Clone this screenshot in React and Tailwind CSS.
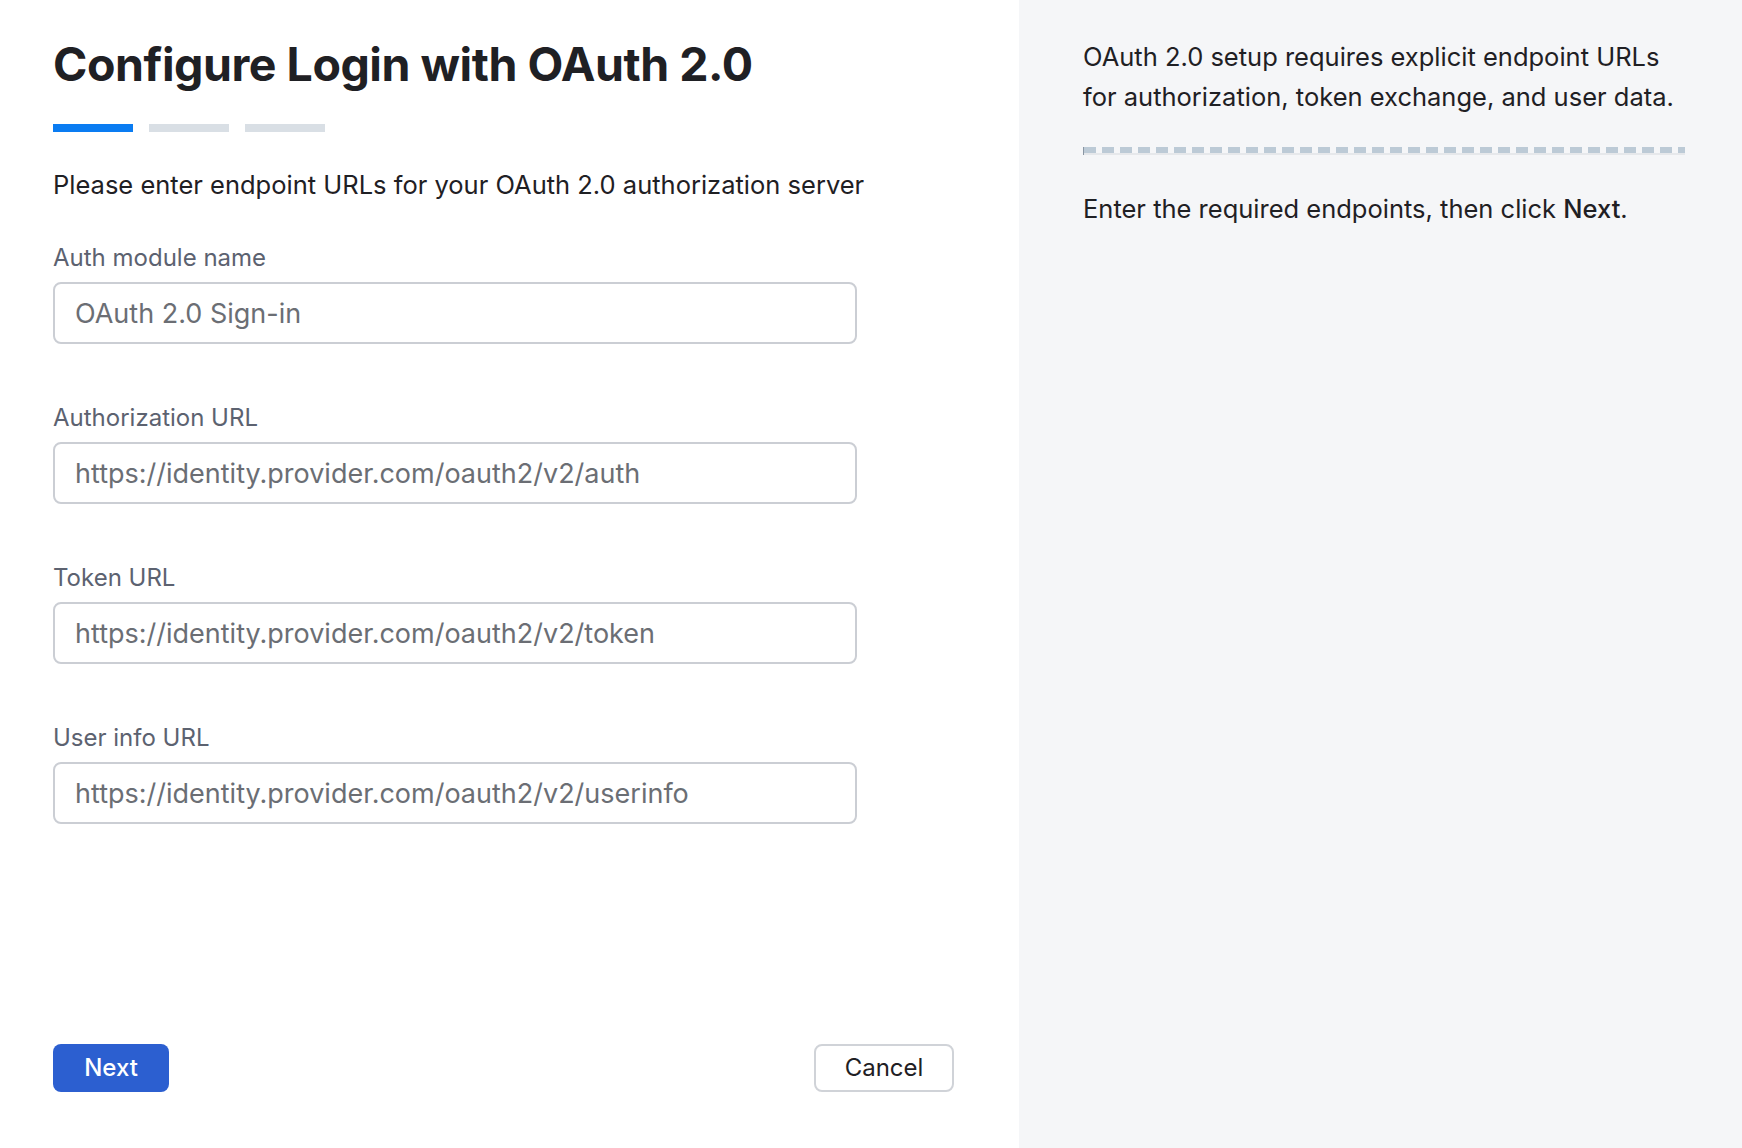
export default function App() {
  const fields = [
    { label: "Auth module name", value: "OAuth 2.0 Sign-in" },
    { label: "Authorization URL", value: "https://identity.provider.com/oauth2/v2/auth" },
    { label: "Token URL", value: "https://identity.provider.com/oauth2/v2/token" },
    { label: "User info URL", value: "https://identity.provider.com/oauth2/v2/userinfo" },
  ];

  return (
    <div className="flex h-[1148px] w-full font-['Inter',sans-serif] text-[#1f2024]">
      {/* left: form */}
      <div className="flex w-[1019px] shrink-0 flex-col bg-white pl-[53px] pr-[65px]">
        <h1 className="mt-[37px] text-[46.5px] font-bold leading-[54px] tracking-[-0.01em]">
          Configure Login with OAuth 2.0
        </h1>
        <div className="mt-[33px] flex gap-4">
          <div className="h-2 w-20 bg-[#0a7cf2]" />
          <div className="h-2 w-20 bg-[#d9dfe5]" />
          <div className="h-2 w-20 bg-[#d9dfe5]" />
        </div>
        <p className="mt-[37px] text-[25.5px] leading-[32px]">
          Please enter endpoint URLs for your OAuth 2.0 authorization server
        </p>
        <div className="mt-[42px] flex flex-col gap-[59px]">
          {fields.map((f) => (
            <div key={f.label} className="flex flex-col">
              <label className="text-[24px] leading-[30px] text-[#5c6270]">{f.label}</label>
              <input
                readOnly
                value={f.value}
                className="mt-[9px] h-[62px] w-[804px] rounded-lg border-2 border-[#cbced4] px-[20px] text-[27px] text-[#6b6e74] outline-none"
              />
            </div>
          ))}
        </div>
        <div className="mt-auto mb-[56px] flex items-center justify-between">
          <button className="h-[48px] w-[116px] rounded-lg bg-[#2c5fd0] text-[24px] font-medium text-white">
            Next
          </button>
          <button className="h-[48px] w-[140px] rounded-lg border-2 border-[#d0d3d8] bg-white text-[24px] text-[#1f2024]">
            Cancel
          </button>
        </div>
      </div>

      {/* right: help */}
      <div className="flex flex-1 flex-col bg-[#f5f6f8] pl-[64px] pr-[57px]">
        <p className="mt-[37px] text-[25.5px] leading-[40px]">
          OAuth 2.0 setup requires explicit endpoint URLs for authorization, token exchange, and user data.
        </p>
        <div className="mt-[30px] flex flex-col border-l border-[#8a96a3]">
          <div className="h-[6px] bg-[repeating-linear-gradient(90deg,#bccad6_0_12px,transparent_12px_18px)]" />
          <div className="h-[2px] bg-[#e6e8eb]" />
        </div>
        <p className="mt-[38px] text-[25.5px] leading-[32px]">
          Enter the required endpoints, then click <span className="font-medium">Next</span>.
        </p>
      </div>
    </div>
  );
}
